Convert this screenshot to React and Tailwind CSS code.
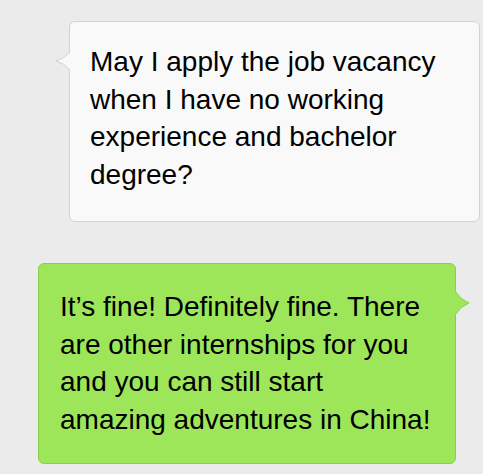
export default function App() {
  return (
    <div
      className="w-[483px] h-[474px] overflow-hidden bg-[#ebebeb] flex flex-col"
      style={{ fontFamily: '"Liberation Sans", Arial, Helvetica, sans-serif' }}
    >
      {/* incoming message */}
      <div className="relative ml-[69px] mt-[21px] w-[411px] h-[201px] rounded-[6px] border border-[#d3d3d3] bg-[#f9f9f9] pl-[20px] pt-[21px] text-[28px] leading-[37.5px] text-black">
        <svg
          className="absolute left-[-15px] top-[30px]"
          width="16"
          height="18"
          viewBox="0 0 16 18"
        >
          <path d="M15 0 Q9 7 1 9 Q9 11 15 18 Z" fill="#f9f9f9" />
          <path d="M15 0 Q9 7 1 9 Q9 11 15 18" fill="none" stroke="#d3d3d3" strokeWidth="1" />
        </svg>
        <div>May I apply the job vacancy</div>
        <div>when I have no working</div>
        <div>experience and bachelor</div>
        <div>degree?</div>
      </div>

      {/* outgoing message */}
      <div className="relative ml-[38px] mt-[41px] w-[418px] h-[201px] rounded-[6px] border border-[#88d04a] bg-[#9ee659] pl-[21px] pt-[24px] text-[28px] leading-[37.5px] text-black">
        <svg
          className="absolute right-[-15px] top-[27px]"
          width="16"
          height="24"
          viewBox="0 0 16 24"
        >
          <path d="M1 0 Q7 9 15 12 Q7 15 1 24 Z" fill="#9ee659" />
          <path d="M1 0 Q7 9 15 12 Q7 15 1 24" fill="none" stroke="#88d04a" strokeWidth="1" />
        </svg>
        <div>It’s fine! Definitely fine. There</div>
        <div>are other internships for you</div>
        <div>and you can still start</div>
        <div>amazing adventures in China!</div>
      </div>
    </div>
  );
}
